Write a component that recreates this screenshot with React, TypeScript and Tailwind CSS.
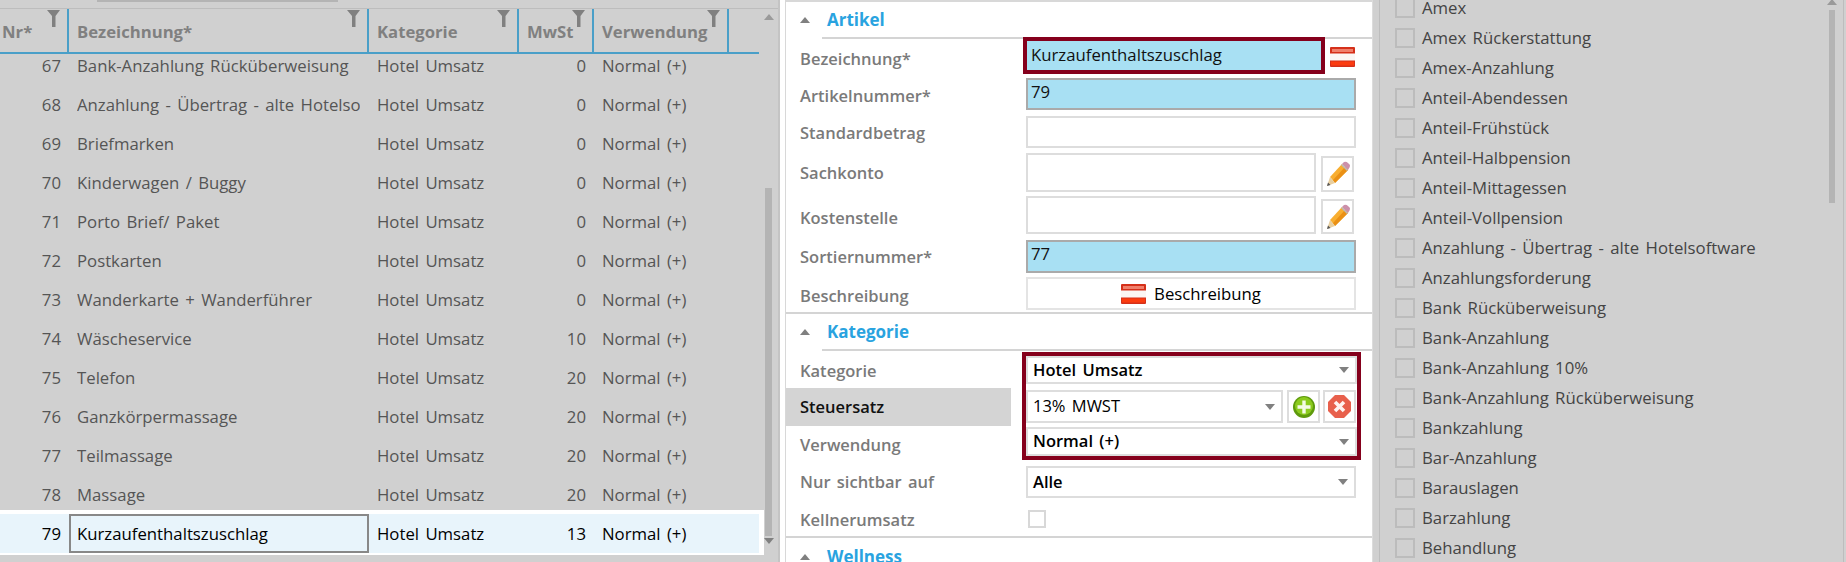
import React from 'react';

const rows = [
  { nr: 67, name: 'Bank-Anzahlung Rücküberweisung', tax: 0 },
  { nr: 68, name: 'Anzahlung - Übertrag - alte Hotelsoftware', tax: 0 },
  { nr: 69, name: 'Briefmarken', tax: 0 },
  { nr: 70, name: 'Kinderwagen / Buggy', tax: 0 },
  { nr: 71, name: 'Porto Brief/ Paket', tax: 0 },
  { nr: 72, name: 'Postkarten', tax: 0 },
  { nr: 73, name: 'Wanderkarte + Wanderführer', tax: 0 },
  { nr: 74, name: 'Wäscheservice', tax: 10 },
  { nr: 75, name: 'Telefon', tax: 20 },
  { nr: 76, name: 'Ganzkörpermassage', tax: 20 },
  { nr: 77, name: 'Teilmassage', tax: 20 },
  { nr: 78, name: 'Massage', tax: 20 },
];

const zahlungsarten = [
  'Amex',
  'Amex Rückerstattung',
  'Amex-Anzahlung',
  'Anteil-Abendessen',
  'Anteil-Frühstück',
  'Anteil-Halbpension',
  'Anteil-Mittagessen',
  'Anteil-Vollpension',
  'Anzahlung - Übertrag - alte Hotelsoftware',
  'Anzahlungsforderung',
  'Bank Rücküberweisung',
  'Bank-Anzahlung',
  'Bank-Anzahlung 10%',
  'Bank-Anzahlung Rücküberweisung',
  'Bankzahlung',
  'Bar-Anzahlung',
  'Barauslagen',
  'Barzahlung',
  'Behandlung',
];

const Funnel = () => (
  <svg width="13" height="17" viewBox="0 0 13 17" className="absolute top-px right-[7px]">
    <path d="M0 0H13L8.5 6V17H5V6Z" fill="#808080" />
  </svg>
);

const Arrow = ({ dir = 'down', color = '#808080' }: { dir?: 'up' | 'down'; color?: string }) => (
  <svg width="10" height="6" viewBox="0 0 10 6">
    <path d={dir === 'down' ? 'M0 0H10L5 6Z' : 'M0 6H10L5 0Z'} fill={color} />
  </svg>
);

const Flag = () => (
  <svg width="25" height="20" viewBox="0 0 25 20" className="shrink-0">
    <rect width="25" height="20" rx="1" fill="#d5301a" />
    <rect x="2" y="2" width="21" height="3" fill="#f0806c" />
    <rect x="0" y="6.500" width="25" height="7" fill="#fbf6f4" />
    <rect x="1" y="14.500" width="23" height="4" fill="#fb3c10" />
  </svg>
);

const Pencil = () => (
  <svg width="26" height="26" viewBox="0 0 26 26">
    <path d="M5 16 L17 3 L23 9 L10 22 Z" fill="#f8ae30" />
    <path d="M8 19 L20 6 L23 9 L10 22 Z" fill="#ea9015" />
    <path d="M17 3 L19 1 Q21 0 23 2 L25 4 Q25.500 6 23 9 Z" fill="#cc90aa" />
    <path d="M16 4 L22 10 L23 9 L17 3 Z" fill="#b9b9b9" />
    <path d="M5 16 L10 22 L2 25 Z" fill="#e8cfa0" />
    <path d="M3 21.500 L5.500 24 L2 25 Z" fill="#555" />
  </svg>
);

const PlusIcon = () => (
  <svg width="22" height="22" viewBox="0 0 22 22">
    <circle cx="11" cy="11" r="11" fill="#5e9a0c" />
    <circle cx="11" cy="10" r="9" fill="#8ccb1e" />
    <path d="M9.300 4.500H12.700V9.300H17.500V12.700H12.700V17.500H9.300V12.700H4.500V9.300H9.300Z" fill="#f4fbe6" />
  </svg>
);

const CloseIcon = () => (
  <svg width="23" height="23" viewBox="0 0 23 23">
    <path d="M7 0H16L23 7V16L16 23H7L0 16V7Z" fill="#e8604c" />
    <path d="M7 7L16 16M16 7L7 16" stroke="#fff3f0" strokeWidth="3.6" fill="none" />
  </svg>
);

const Caret = () => (
  <span className="absolute right-[6px] top-1/2 -translate-y-1/2 flex">
    <Arrow />
  </span>
);

const Label = ({ children, className = '' }: { children: React.ReactNode; className?: string }) => (
  <div className={`w-[240px] pl-[14px] flex items-center text-[16.5px] font-semibold text-[#7a7a7a] ${className}`}>
    {children}
  </div>
);

const SectionHeader = ({ title, className = '' }: { title: string; className?: string }) => (
  <div className={`relative flex items-center pl-[14px] ${className}`}>
    <Arrow dir="up" />
    <span className="ml-[17px] text-[17px] font-bold text-[#29a3e0]">{title}</span>
  </div>
);

const SelectBox = ({ value, className = '' }: { value: string; className?: string }) => (
  <div className={`relative flex items-center pl-[5px] border-2 border-[#dddddd] bg-white text-[16.5px] font-semibold text-black ${className}`}>
    {value}
    <Caret />
  </div>
);

const IconButton = ({ children, className = '' }: { children: React.ReactNode; className?: string }) => (
  <div className={`flex items-center justify-center border-2 border-[#dddddd] bg-white ${className}`}>{children}</div>
);

export default function App() {
  return (
    <div className="flex h-[562px] w-[1846px] overflow-hidden bg-white text-[16.75px] [word-spacing:2px]" style={{ fontFamily: '"Open Sans", sans-serif' }}>
      {/* Artikelliste */}
      <div className="w-[778px] shrink-0 bg-[#d0d0d0] flex flex-col">
        <div className="h-[9px] shrink-0 border-b border-[#bdbdbd]">
          <div className="ml-[97px] w-[241px] h-[2px] bg-[#b4b4b4]" />
        </div>
        <div className="flex flex-1 min-h-0">
          <div className="w-[764px] shrink-0 flex flex-col overflow-hidden">
            <div className="relative z-10 flex h-[45px] w-[759px] shrink-0 bg-[#d0d0d0] border-b-2 border-[#4a9fc8] text-[16.7px] font-bold text-[#808080]">
              <div className="relative w-[69px] pl-[2px] pt-[10px] border-r-2 border-[#4a9fc8]">Nr*<Funnel /></div>
              <div className="relative w-[300px] pl-[8px] pt-[10px] border-r-2 border-[#4a9fc8]">Bezeichnung*<Funnel /></div>
              <div className="relative w-[150px] pl-[8px] pt-[10px] border-r-2 border-[#4a9fc8]">Kategorie<Funnel /></div>
              <div className="relative w-[75px] pl-[8px] pt-[10px] border-r-2 border-[#4a9fc8]">MwSt<Funnel /></div>
              <div className="relative w-[135px] pl-[8px] pt-[10px] border-r-2 border-[#4a9fc8]">Verwendung<Funnel /></div>
            </div>
            <div className="-mt-[8px] flex flex-col text-[#555555]">
              {rows.map((r) => (
                <div key={r.nr} className="flex h-[39px] shrink-0 items-center whitespace-nowrap">
                  <div className="w-[61px] text-right">{r.nr}</div>
                  <div className="ml-[16px] mr-[1px] w-[283px] overflow-hidden">{r.name}</div>
                  <div className="ml-[16px] w-[150px]">Hotel Umsatz</div>
                  <div className="w-[59px] text-right">{r.tax}</div>
                  <div className="ml-[16px]">Normal (+)</div>
                </div>
              ))}
              <div className="-mt-[4px] flex h-[45px] shrink-0 items-center whitespace-nowrap bg-[#e8f4fb] border-t-4 border-b-2 border-r-[5px] border-white text-black">
                <div className="w-[61px] text-right">79</div>
                <div className="ml-[8px] mr-0 flex h-[39px] w-[300px] items-center pl-[6px] border-2 border-[#888888]">Kurzaufenthaltszuschlag</div>
                <div className="ml-[8px] w-[150px]">Hotel Umsatz</div>
                <div className="w-[59px] text-right">13</div>
                <div className="ml-[16px]">Normal (+)</div>
              </div>
            </div>
          </div>
          <div className="w-[7px] shrink-0 ml-px flex flex-col items-center">
            <div className="mt-[5px]"><Arrow dir="up" color="#9a9a9a" /></div>
            <div className="mt-[168px] h-[348px] w-[7px] bg-[#b4b4b4]" />
            <div className="mt-[2px]"><Arrow color="#808080" /></div>
          </div>
        </div>
      </div>
      <div className="w-[7px] shrink-0 bg-white border-l-2 border-[#c4c4c4]" />

      {/* Artikel Formular */}
      <div className="w-[587px] shrink-0 border-l border-t-2 border-[#d8d8d8] bg-white flex flex-col text-[#111111]">
        <SectionHeader title="Artikel" className="h-[35px] shrink-0" />
        <div className="ml-[36px] h-[2px] shrink-0 bg-[#d4d4d4]" />

        <div className="flex h-[37px] shrink-0">
          <Label className="pt-[3px]">Bezeichnung*</Label>
          <div className="-mt-[2px] -ml-[3px] flex h-[37px] w-[302px] items-center pl-[4px] pb-[2px] border-4 border-[#85001c] bg-[#a8e0f3]">Kurzaufenthaltszuschlag</div>
          <div className="ml-[5px] mt-[8px]"><Flag /></div>
        </div>
        <div className="flex h-[37px] shrink-0">
          <Label className="pt-[3px]">Artikelnummer*</Label>
          <div className="mt-[2px] h-[32px] w-[330px] pl-[3px] border-2 border-[#aaaaaa] bg-[#a8e0f3] leading-[24px]">79</div>
        </div>
        <div className="flex h-[38px] shrink-0">
          <Label className="pt-[2px]">Standardbetrag</Label>
          <div className="mt-[3px] h-[32px] w-[330px] border-2 border-[#dddddd]" />
        </div>
        <div className="flex h-[43px] shrink-0">
          <Label className="pt-[2px]">Sachkonto</Label>
          <div className="mt-[2px] h-[39px] w-[290px] border-2 border-[#dddddd]" />
          <IconButton className="ml-[5px] mt-[5px] h-[36px] w-[33px]"><Pencil /></IconButton>
        </div>
        <div className="flex h-[43px] shrink-0">
          <Label className="pt-[5px]">Kostenstelle</Label>
          <div className="mt-[2px] h-[38px] w-[290px] border-2 border-[#dddddd]" />
          <IconButton className="ml-[5px] mt-[5px] h-[35px] w-[33px]"><Pencil /></IconButton>
        </div>
        <div className="flex h-[38px] shrink-0">
          <Label className="pt-[2px]">Sortiernummer*</Label>
          <div className="mt-[3px] h-[33px] w-[330px] pl-[3px] border-2 border-[#aaaaaa] bg-[#a8e0f3] leading-[24px]">77</div>
        </div>
        <div className="flex h-[37px] shrink-0">
          <Label className="pt-[5px]">Beschreibung</Label>
          <div className="mt-[2px] flex h-[33px] w-[330px] items-center justify-center gap-[8px] border-2 border-[#e4e4e4] text-black">
            <Flag />
            Beschreibung
          </div>
        </div>
        <div className="h-[2px] shrink-0 bg-[#d4d4d4]" />

        <SectionHeader title="Kategorie" className="h-[35px] shrink-0" />
        <div className="ml-[36px] h-[2px] shrink-0 bg-[#d4d4d4]" />

        <div className="flex h-[113px] shrink-0">
          <div className="w-[225px] shrink-0 flex flex-col">
            <Label className="h-[37px] w-full pt-[3px]">Kategorie</Label>
            <Label className="h-[38px] w-full bg-[#d4d4d4] !text-[#111111]">Steuersatz</Label>
            <Label className="h-[38px] w-full">Verwendung</Label>
          </div>
          <div className="ml-[11px] mt-px h-[108px] w-[339px] border-4 border-[#85001c] flex flex-col">
            <SelectBox value="Hotel Umsatz" className="h-[28px] shrink-0" />
            <div className="mt-[6px] flex h-[33px] shrink-0">
              <SelectBox value="13% MWST" className="w-[257px] !font-medium" />
              <IconButton className="ml-[4px] w-[33px]"><PlusIcon /></IconButton>
              <IconButton className="ml-[3px] w-[33px]"><CloseIcon /></IconButton>
            </div>
            <SelectBox value="Normal (+)" className="mt-[4px] h-[29px] shrink-0" />
          </div>
        </div>
        <div className="flex h-[37px] shrink-0">
          <Label>Nur sichtbar auf</Label>
          <SelectBox value="Alle" className="mt-[2px] h-[32px] w-[330px]" />
        </div>
        <div className="flex h-[35px] shrink-0">
          <Label className="pt-[3px]">Kellnerumsatz</Label>
          <div className="ml-[2px] mt-[9px] h-[18px] w-[18px] border-2 border-[#d8d8d8]" />
        </div>
        <div className="h-[2px] shrink-0 bg-[#d4d4d4]" />
        <SectionHeader title="Wellness" className="h-[38px] shrink-0" />
      </div>

      {/* Zahlungsarten */}
      <div className="flex-1 flex bg-[#d0d0d0] border-l border-[#dcdcdc] min-w-0">
        <div className="ml-[6px] flex-1 flex border-l border-r border-[#bdbdbd] min-w-0">
          <div className="flex-1 -mt-[7px] pl-[15px] flex flex-col text-[#444444]">
            {zahlungsarten.map((z) => (
              <div key={z} className="flex h-[30px] shrink-0 items-center whitespace-nowrap">
                <div className="h-[20px] w-[20px] shrink-0 border-2 border-[#bcbcbc]" />
                <span className="ml-[7px]">{z}</span>
              </div>
            ))}
          </div>
          <div className="w-[7px] mr-[8px] flex flex-col items-center">
            <div className="flex -mt-[1px]"><Arrow dir="up" color="#9a9a9a" /></div>
            <div className="mt-[5px] h-[193px] w-[6px] bg-[#b4b4b4]" />
          </div>
        </div>
        <div className="w-[2px] shrink-0" />
      </div>
    </div>
  );
}
